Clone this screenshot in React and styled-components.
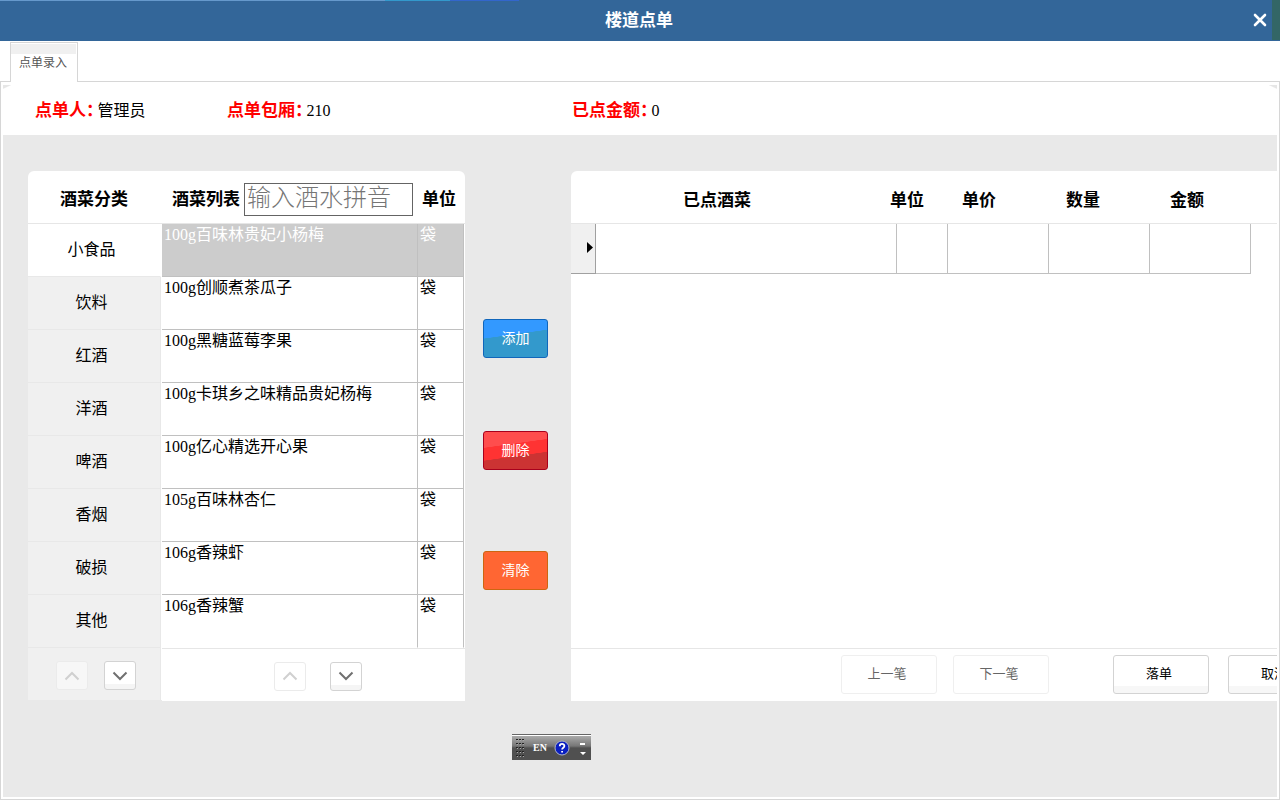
import React, { useState } from "react";
import styled, { createGlobalStyle, css } from "styled-components";

const GlobalStyle = createGlobalStyle`
  *, *::before, *::after { box-sizing: border-box; }
  body {
    margin: 0;
    background: #fff;
    color: #000;
    font-family: "Liberation Serif", "Noto Sans CJK SC", serif;
    font-size: 16px;
    line-height: 20px;
  }
  button, input { font-family: inherit; margin: 0; }
  button { cursor: pointer; }
`;

const Window = styled.div`
  position: relative;
  display: flex;
  flex-direction: column;
  min-height: 100vh;
  overflow: hidden;
`;

const TitleBar = styled.header`
  display: flex;
  align-items: center;
  height: 41px;
  flex: none;
  background:
    linear-gradient(#336666, #336666) right top / 8px 40px no-repeat,
    linear-gradient(90deg, #6699cc 385px, #3399cc 385px 450px, #3366cc 450px 519px, #336699 519px) left top / 100% 1px no-repeat,
    #336699;
`;

const Title = styled.h1`
  flex: 1;
  margin: 0;
  padding-left: 30px;
  text-align: center;
  color: #fff;
  font-size: 17px;
  font-weight: 700;
  line-height: 20px;
`;

const CloseButton = styled.button`
  display: flex;
  align-items: center;
  justify-content: center;
  width: 24px;
  height: 24px;
  margin-right: 8px;
  padding: 0 0 2px;
  border: 0;
  background: none;
`;

const TabBar = styled.nav`
  display: flex;
  align-items: flex-end;
  height: 41px;
  flex: none;
  padding-left: 10px;
  margin-bottom: -1px;
  z-index: 1;
`;

const Tab = styled.button`
  width: 68px;
  height: 40px;
  padding: 1px 2px 0 0;
  border: 1px solid #d6d6d6;
  border-bottom: 0;
  color: #555;
  font-size: 12px;
  line-height: 20px;
  background: linear-gradient(#f0f0f0, #f0f0f0) 0 1px / 65px 10px no-repeat #fff;
`;

const Panel = styled.main`
  display: flex;
  flex-direction: column;
  flex: 1;
  padding: 2px;
  border: 1px solid #d6d6d6;
  min-width: 0;
`;

const InfoBar = styled.section`
  display: flex;
  align-items: center;
  height: 51px;
  flex: none;
  padding: 2px 0 0 32px;
  background:
    linear-gradient(155deg, #e6e6e6 3px, transparent 4px) left 1px / 9px 4px no-repeat,
    linear-gradient(205deg, #e6e6e6 3px, transparent 4px) right 1px / 9px 4px no-repeat;
`;

const InfoItem = styled.p`
  display: flex;
  flex: none;
  width: ${(p) => p.$width}px;
  margin: 0;
  white-space: nowrap;
`;

const InfoLabel = styled.strong`
  margin-right: 3px;
  color: #f00;
  font-size: 17px;
  font-feature-settings: "halt";
`;

const Workspace = styled.div`
  display: flex;
  align-items: flex-start;
  flex: 1;
  padding: 36px 0 36px 25px;
  background: #e9e9e9;
  overflow: hidden;
`;

const CatalogCard = styled.section`
  display: flex;
  align-items: flex-start;
  flex: none;
  width: 437px;
  border-radius: 6px 6px 0 0;
  overflow: hidden;
`;

const CategoryColumn = styled.div`
  width: 134px;
  flex: none;
  background: #fff;
`;

const ColumnHeading = styled.h2`
  display: flex;
  align-items: center;
  justify-content: center;
  height: 53px;
  margin: 0;
  padding: 6px 2px 0 0;
  border-bottom: 1px solid #e6e6e6;
  font-size: 17px;
  font-weight: 700;
  line-height: 20px;
`;

const Category = styled.button`
  display: block;
  width: 133px;
  height: 53px;
  padding: 0 5px 0 0;
  border: solid #e8e8e8;
  border-width: 0 1px 1px 0;
  background: ${(p) => (p.$active ? "#fff" : "#f0f0f0")};
  border-right-color: ${(p) => (p.$active ? "#fff" : "#e8e8e8")};
  color: #000;
  font-size: 16px;
  line-height: 20px;
`;

const pagerStyles = css`
  display: flex;
  align-items: center;
  height: 53px;
`;

const CategoryPager = styled.div`
  ${pagerStyles}
  width: 133px;
  height: 52px;
  gap: 16px;
  padding: 3px 0 0 28px;
  border-right: 1px solid #e8e8e8;
  background: #f0f0f0;
`;

const ProductPager = styled.div`
  ${pagerStyles}
  gap: 24px;
  padding: 2px 0 0 112px;
  border-top: 1px solid #e6e6e6;
`;

const PageButton = styled.button`
  display: flex;
  align-items: center;
  justify-content: center;
  width: 32px;
  height: 29px;
  padding: 0;
  border: 1px solid #d3d3d3;
  border-radius: 3px;
  color: #707070;
  background: linear-gradient(#fff 22px, #f5f5f5 22px);

  &:disabled {
    border-color: #ebebeb;
    color: #d0d0d0;
    background: ${(p) => (p.$tinted ? "#f7f7f7" : "#fff")};
  }
`;

const ProductColumn = styled.div`
  flex: 1;
  background: #fff;
`;

const ProductTable = styled.table`
  display: block;
  font-size: 16px;

  thead, tbody { display: block; }
  tr {
    display: grid;
    grid-template-columns: 256px 46px;
  }
  thead tr {
    height: 53px;
    align-items: center;
    border-bottom: 1px solid #e6e6e6;
  }
  th {
    display: flex;
    align-items: center;
    padding: 6px 0 0 4px;
    font-size: 17px;
    line-height: 20px;
    white-space: nowrap;
  }
  th:first-child {
    align-items: flex-start;
    gap: 4px;
    padding: 5px 0 0 10px;
  }
  label { padding-top: 7px; }
  td {
    padding: 1px 2px;
    border: solid #c0c0c0;
    border-width: 0 1px 1px 0;
  }
  tbody tr:last-child td { border-bottom-color: #fff; }
`;

const ProductRow = styled.tr`
  width: 302px;
  height: 53px;
  cursor: default;
  ${(p) => p.$selected && css`
    background: #ccc;
    color: #fff;
  `}
`;

const SearchInput = styled.input`
  width: 169px;
  height: 33px;
  padding: 0 2px 2px;
  border: 1px solid #646464;
  border-radius: 0;
  outline: 0;
  background: #fff;
  font-size: 24px;
  font-weight: 300;
  line-height: 28px;

  &::placeholder { color: #757575; opacity: 1; }
`;

const ActionColumn = styled.div`
  display: flex;
  flex-direction: column;
  flex: none;
  gap: 73px;
  width: 106px;
  padding: 148px 0 0 18px;
`;

const fills = {
  add: css`
    border-color: #1166bb;
    background: linear-gradient(172deg, #3399ff 40%, #3399cc 41%);
  `,
  remove: css`
    border-color: #a8001c;
    background: linear-gradient(172deg, #ff4d4d 34%, #ff3333 35% 62%, #cc3333 63%);
  `,
  clear: css`
    margin-top: 8px;
    border-color: #cc6611;
    background: #ff6633;
  `,
};

const ActionButton = styled.button`
  width: 65px;
  height: 39px;
  padding: 0;
  border: 1px solid;
  border-radius: 3px;
  color: #fff;
  font-size: 14px;
  line-height: 20px;
  ${(p) => fills[p.$kind]}
`;

const OrderCard = styled.section`
  display: flex;
  flex-direction: column;
  flex: 1;
  min-width: 0;
  height: 530px;
  border-radius: 6px 0 0 0;
  background: #fff;
  overflow: hidden;
`;

const OrderTable = styled.table`
  display: block;
  flex: 1;

  thead, tbody { display: block; }
  tr { display: grid; }
  thead tr {
    grid-template-columns: 292px 88px 56px 152px 56px;
    align-items: center;
    height: 53px;
    border-bottom: 1px solid #e6e6e6;
  }
  th {
    padding: 8px 0 0;
    font-size: 17px;
    line-height: 20px;
    text-align: center;
  }
  tbody tr {
    grid-template-columns: 25px 301px 51px 101px 101px 101px;
    height: 50px;
  }
  td {
    padding: 0;
    border: solid #c0c0c0;
    border-width: 0 1px 1px 0;
  }
`;

const RowMarker = styled.td`
  display: flex;
  align-items: center;
  justify-content: flex-end;
  background: #f0f0f0;

  && { border-color: #a0a0a0; padding: 0 2px 2px 0; }
`;

const OrderActions = styled.footer`
  display: flex;
  align-items: center;
  flex: none;
  height: 53px;
  padding: 0 0 2px 270px;
  border-top: 1px solid #e6e6e6;
`;

const OrderButton = styled.button`
  flex: none;
  width: 96px;
  height: 39px;
  margin-right: ${(p) => p.$after || 0}px;
  padding: 0 4px 0 0;
  border: 1px solid #d3d3d3;
  border-radius: 3px;
  color: #000;
  background: linear-gradient(#fff 30px, #f7f7f7 30px);
  font-size: 13px;
  font-weight: 400;
  line-height: 20px;

  &:disabled {
    border-color: #efefef;
    color: #666;
    background: #fff;
  }
`;

const LanguageBar = styled.div`
  position: absolute;
  left: 40%;
  bottom: 40px;
  display: flex;
  align-items: center;
  width: 79px;
  height: 26px;
  padding: 0 4px 0;
  border-top: 1px solid #666;
  background: linear-gradient(#fff 1px, #aaa 1px, #777 11px, #505050 13px, #505050);
  color: #fff;
  font-size: 10px;
  font-weight: 700;
`;

const LanguageCode = styled.span`
  width: 21px;
  margin-left: 8px;
  line-height: 20px;
`;

const HelpButton = styled.button`
  display: flex;
  width: 16px;
  height: 16px;
  padding: 0;
  border: 0;
  background: none;
`;

const BarMenuButton = styled(HelpButton)`
  width: 8px;
  margin-left: 9px;
`;

function Chevron({ up }) {
  return (
    <svg width="16" height="12" viewBox="0 0 16 12" fill="none" stroke="currentColor" strokeWidth="2" aria-hidden="true">
      <path d={up ? "M1.5 9.5 8 3l6.5 6.5" : "M1.5 2.500 8 9l6.500-6.500"} />
    </svg>
  );
}

function Grip() {
  const dots = [];
  for (let y = 0; y < 5; y += 1) {
    for (let x = 0; x < 3; x += 1) dots.push([x * 3, y * 4]);
  }
  return (
    <svg width="9" height="18" viewBox="0 0 9 18" aria-hidden="true">
      {dots.map(([x, y]) => (
        <g key={`${x}-${y}`}>
          <rect x={x + 1} y={y + 1} width="1" height="1" fill="#aaa" />
          <rect x={x} y={y} width="2" height="1" fill="#222" />
        </g>
      ))}
    </svg>
  );
}

const categories = ["小食品", "饮料", "红酒", "洋酒", "啤酒", "香烟", "破损", "其他"];

const products = [
  ["100g百味林贵妃小杨梅", "袋"],
  ["100g创顺煮茶瓜子", "袋"],
  ["100g黑糖蓝莓李果", "袋"],
  ["100g卡琪乡之味精品贵妃杨梅", "袋"],
  ["100g亿心精选开心果", "袋"],
  ["105g百味林杏仁", "袋"],
  ["106g香辣虾", "袋"],
  ["106g香辣蟹", "袋"],
];

export default function App() {
  const [category, setCategory] = useState(0);
  const [selected, setSelected] = useState(0);

  return (
    <>
      <GlobalStyle />
      <Window>
        <TitleBar>
          <Title>楼道点单</Title>
          <CloseButton type="button" aria-label="关闭">
            <svg width="14" height="14" viewBox="0 0 14 14" stroke="#fff" strokeWidth="2.6" strokeLinecap="round" aria-hidden="true">
              <path d="M2 2l10 10M12 2L2 12" />
            </svg>
          </CloseButton>
        </TitleBar>
        <TabBar>
          <Tab type="button">点单录入</Tab>
        </TabBar>
        <Panel>
          <InfoBar>
            <InfoItem $width={192}><InfoLabel>点单人：</InfoLabel>管理员</InfoItem>
            <InfoItem $width={345}><InfoLabel>点单包厢：</InfoLabel>210</InfoItem>
            <InfoItem $width={192}><InfoLabel>已点金额：</InfoLabel>0</InfoItem>
          </InfoBar>
          <Workspace>
            <CatalogCard>
              <CategoryColumn>
                <ColumnHeading>酒菜分类</ColumnHeading>
                {categories.map((name, i) => (
                  <Category key={name} type="button" $active={i === category} onClick={() => setCategory(i)}>
                    {name}
                  </Category>
                ))}
                <CategoryPager>
                  <PageButton type="button" $tinted disabled aria-label="上一页分类"><Chevron up /></PageButton>
                  <PageButton type="button" aria-label="下一页分类"><Chevron /></PageButton>
                </CategoryPager>
              </CategoryColumn>
              <ProductColumn>
                <ProductTable>
                  <thead>
                    <tr>
                      <th>
                        <label htmlFor="search">酒菜列表</label>
                        <SearchInput id="search" type="text" placeholder="输入酒水拼音" />
                      </th>
                      <th>单位</th>
                    </tr>
                  </thead>
                  <tbody>
                    {products.map(([name, unit], i) => (
                      <ProductRow key={name} $selected={i === selected} onClick={() => setSelected(i)}>
                        <td>{name}</td>
                        <td>{unit}</td>
                      </ProductRow>
                    ))}
                  </tbody>
                </ProductTable>
                <ProductPager>
                  <PageButton type="button" disabled aria-label="上一页酒菜"><Chevron up /></PageButton>
                  <PageButton type="button" aria-label="下一页酒菜"><Chevron /></PageButton>
                </ProductPager>
              </ProductColumn>
            </CatalogCard>
            <ActionColumn>
              <ActionButton type="button" $kind="add">添加</ActionButton>
              <ActionButton type="button" $kind="remove">删除</ActionButton>
              <ActionButton type="button" $kind="clear">清除</ActionButton>
            </ActionColumn>
            <OrderCard>
              <OrderTable>
                <thead>
                  <tr>
                    <th>已点酒菜</th>
                    <th>单位</th>
                    <th>单价</th>
                    <th>数量</th>
                    <th>金额</th>
                  </tr>
                </thead>
                <tbody>
                  <tr>
                    <RowMarker>
                      <svg width="6" height="11" viewBox="0 0 6 11" aria-hidden="true"><path d="M0 0l6 5.500L0 11z" /></svg>
                    </RowMarker>
                    <td /><td /><td /><td /><td />
                  </tr>
                </tbody>
              </OrderTable>
              <OrderActions>
                <OrderButton type="button" disabled $after={16}>上一笔</OrderButton>
                <OrderButton type="button" disabled $after={64}>下一笔</OrderButton>
                <OrderButton type="button" $after={19}>落单</OrderButton>
                <OrderButton type="button">取消</OrderButton>
              </OrderActions>
            </OrderCard>
          </Workspace>
        </Panel>
        <LanguageBar>
          <Grip />
          <LanguageCode>EN</LanguageCode>
          <HelpButton type="button" aria-label="帮助">
            <svg width="16" height="16" viewBox="0 0 16 16" aria-hidden="true">
              <circle cx="8" cy="8" r="7" fill="#0a1fc0" stroke="#b0b4c8" />
              <path d="M5.800 6.200c0-3 4.600-3 4.600-.2 0 1.700-2.300 1.700-2.300 3.500M8.100 11v1.600" fill="none" stroke="#fff" strokeWidth="1.800" />
            </svg>
          </HelpButton>
          <BarMenuButton type="button" aria-label="选项">
            <svg width="8" height="16" viewBox="0 0 8 16" fill="#fff" aria-hidden="true">
              <path d="M1 3h5v2H1zM1 12h6l-3 3z" />
            </svg>
          </BarMenuButton>
        </LanguageBar>
      </Window>
    </>
  );
}
